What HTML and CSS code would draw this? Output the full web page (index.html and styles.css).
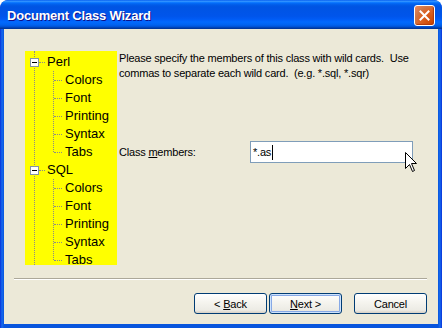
FILE: index.html
```html
<!DOCTYPE html>
<html lang="en">
<head>
  <meta charset="UTF-8">
  <title>Document Class Wizard</title>
  <link rel="stylesheet" href="styles.css">
</head>
<body>

<div class="window">
  <div class="titlebar">
    <span class="title">Document Class Wizard</span>
    <span class="close">
      <svg width="11" height="11" viewBox="0 0 11 11">
        <path d="M1.5 1.5 L9.5 9.5 M9.5 1.5 L1.5 9.5" stroke="#fff" stroke-width="2" stroke-linecap="square"/>
      </svg>
    </span>
  </div>

  <div class="client">
    <div class="main">
      <div class="tree">
        <div class="node root"><span class="toggle"></span><span class="stub"></span>Perl</div>
        <div class="children">
          <div class="node child">Colors</div>
          <div class="node child">Font</div>
          <div class="node child">Printing</div>
          <div class="node child">Syntax</div>
          <div class="node child">Tabs</div>
        </div>
        <div class="node root"><span class="toggle"></span><span class="stub"></span>SQL</div>
        <div class="children">
          <div class="node child">Colors</div>
          <div class="node child">Font</div>
          <div class="node child">Printing</div>
          <div class="node child">Syntax</div>
          <div class="node child">Tabs</div>
        </div>
      </div>

      <div class="page">
        <p class="hint">Please specify the members of this class with wild cards.&nbsp; Use<br>commas to separate each wild card.&nbsp; (e.g. *.sql, *.sqr)</p>
        <div class="field">
          <label>Class <u>m</u>embers:</label>
          <div class="edit">*.as<span class="caret"></span></div>
        </div>
      </div>
    </div>

    <div class="separator"></div>

    <div class="buttons">
      <button class="btn">&lt; <u>B</u>ack</button>
      <button class="btn default"><u>N</u>ext &gt;</button>
      <button class="btn cancel">Cancel</button>
    </div>
  </div>

  <svg class="pointer" width="13" height="21" viewBox="0 0 13 21">
    <path d="M0.5 0.5 L0.5 16.5 L4.5 12.5 L7.5 19.5 L9.5 18.5 L6.5 11.5 L11.5 11.5 Z" fill="#fff" stroke="#000" stroke-width="1" stroke-linejoin="miter"/>
  </svg>
</div>

</body>
</html>
```

FILE: styles.css
```css
html, body {
  margin: 0;
  background: #ffffff;
}
.window {
  position: relative;
  width: 442px;
  height: 328px;
  box-sizing: border-box;
  padding: 0 4px 4px 4px;
  border-radius: 8px 8px 0 0;
  background: linear-gradient(to right, #0831d9 0, #166aee 2px, #0855dd 4px, #0855dd 438px, #166aee 440px, #0831d9 442px);
  font-family: "Liberation Sans", Arial, sans-serif;
  overflow: hidden;
}
.titlebar {
  height: 29px;
  margin: 0 -4px;
  padding: 5px 7px 0 7px;
  box-sizing: border-box;
  display: flex;
  justify-content: space-between;
  align-items: flex-start;
  border-radius: 8px 8px 0 0;
  background: linear-gradient(to bottom, #0058ee 0%, #3593ff 4%, #288eff 6%, #127dff 8%, #036ffc 10%, #0262ee 14%, #0057e5 20%, #0054e3 24%, #0055eb 56%, #005bf5 66%, #026afe 76%, #0062ef 86%, #0052d6 92%, #0040ab 96%, #003092 100%);
}
.title {
  color: #ffffff;
  font-weight: bold;
  font-size: 13px;
  letter-spacing: -0.2px;
  line-height: 20px;
  margin-top: 1px;
  text-shadow: 1px 1px #0f1089;
}
.close {
  width: 21px;
  height: 21px;
  box-sizing: border-box;
  border: 1px solid #ffffff;
  border-radius: 3px;
  display: flex;
  align-items: center;
  justify-content: center;
  background: radial-gradient(circle at 90% 90%, #cc4600 0%, #dc6527 55%, #cd7546 70%, #f08a5e 100%);
  box-shadow: inset -1px -1px 1px #b03a0c;
}
.client {
  height: 295px;
  box-sizing: border-box;
  background: #ece9d8;
  font-size: 11px;
  color: #000000;
}
.main {
  display: flex;
  padding: 22px 0 0 21px;
}
.tree {
  position: relative;
  width: 92px;
  height: 214px;
  box-sizing: border-box;
  padding-top: 2px;
  background: #ffff00;
  overflow: hidden;
  font-size: 13px;
}
.tree::before {
  content: "";
  position: absolute;
  left: 9px;
  top: 0;
  bottom: 0;
  border-left: 1px dotted #8a8a8a;
}
.node {
  position: relative;
  height: 18px;
  line-height: 18px;
  display: flex;
  align-items: center;
  white-space: nowrap;
}
.root {
  padding-left: 5px;
}
.toggle {
  position: relative;
  width: 9px;
  height: 9px;
  box-sizing: border-box;
  border: 1px solid #8494a4;
  background: #ffffff;
  display: flex;
  align-items: center;
  justify-content: center;
}
.toggle::after {
  content: "";
  width: 5px;
  height: 1px;
  background: #000000;
}
.stub {
  width: 6px;
  height: 0;
  border-top: 1px dotted #8a8a8a;
  margin-right: 2px;
}
.children {
  position: relative;
}
.children::before {
  content: "";
  position: absolute;
  left: 28px;
  top: 0;
  bottom: 9px;
  border-left: 1px dotted #8a8a8a;
}
.child {
  padding-left: 40px;
}
.child::before {
  content: "";
  position: absolute;
  left: 29px;
  top: 9px;
  width: 8px;
  border-top: 1px dotted #8a8a8a;
}
.page {
  padding-left: 2px;
  letter-spacing: -0.2px;
}
.hint {
  margin: 0;
  line-height: 15px;
}
.field {
  display: flex;
  align-items: center;
  margin-top: 60px;
}
.field label {
  width: 131px;
}
.edit {
  width: 163px;
  height: 22px;
  box-sizing: border-box;
  border: 1px solid #7f9db9;
  background: #ffffff;
  padding-left: 2px;
  display: flex;
  align-items: center;
}
.caret {
  width: 1px;
  height: 15px;
  margin-left: 1px;
  background: #000000;
}
.separator {
  height: 1px;
  margin: 13px 11px 0 10px;
  background: #aca899;
  border-bottom: 1px solid #ffffff;
}
.buttons {
  display: flex;
  justify-content: flex-end;
  margin-top: 13px;
  padding-right: 11px;
  gap: 2px;
}
.btn {
  width: 73px;
  height: 21px;
  padding: 0;
  border: 1px solid #003c74;
  border-radius: 3px;
  background: linear-gradient(to bottom, #ffffff 0%, #f6f5f0 40%, #ecebe4 85%, #d6d0c5 100%);
  font-family: "Liberation Sans", Arial, sans-serif;
  font-size: 11px;
  letter-spacing: -0.2px;
  color: #000000;
}
.btn.default {
  box-shadow: inset 0 0 0 1px #cee3fc, inset 0 0 0 2px #87a9e6;
}
.btn.cancel {
  margin-left: 10px;
}
.pointer {
  position: absolute;
  left: 405px;
  top: 152px;
}
```
